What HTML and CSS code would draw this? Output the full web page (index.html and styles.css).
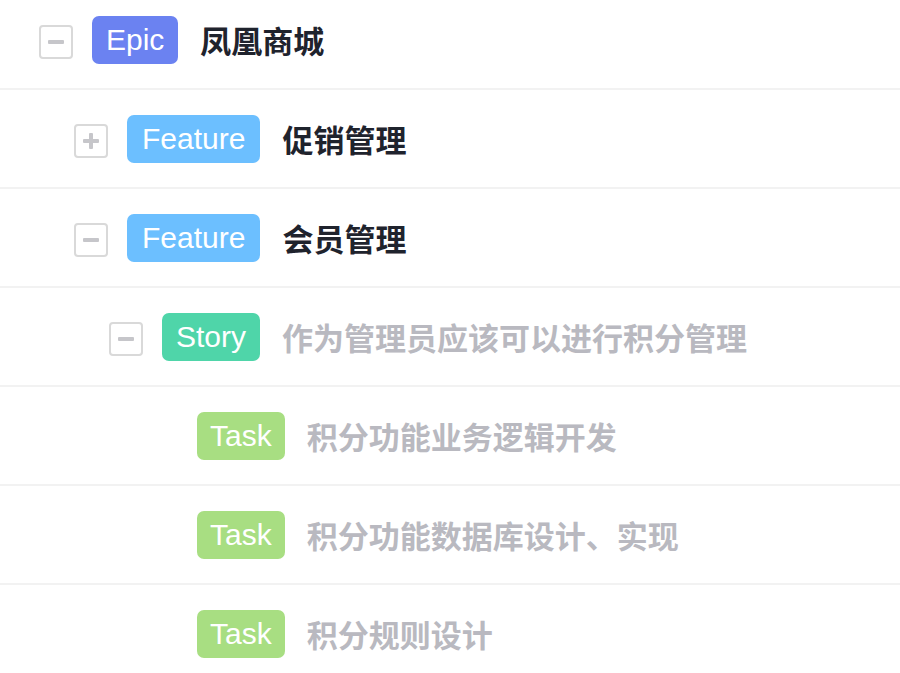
FILE: index.html
```html
<!DOCTYPE html>
<html lang="zh">
<head>
<meta charset="utf-8">
<link rel="stylesheet" href="styles.css">
</head>
<body>
<div class="tree">
  <div class="row lvl0">
    <span class="toggle minus"></span>
    <span class="badge epic">Epic</span>
    <span class="title">凤凰商城</span>
  </div>
  <div class="row lvl1">
    <span class="toggle plus"></span>
    <span class="badge feature">Feature</span>
    <span class="title">促销管理</span>
  </div>
  <div class="row lvl1">
    <span class="toggle minus"></span>
    <span class="badge feature">Feature</span>
    <span class="title">会员管理</span>
  </div>
  <div class="row lvl2">
    <span class="toggle minus"></span>
    <span class="badge story">Story</span>
    <span class="title muted">作为管理员应该可以进行积分管理</span>
  </div>
  <div class="row lvl3">
    <span class="toggle leaf"></span>
    <span class="badge task">Task</span>
    <span class="title muted">积分功能业务逻辑开发</span>
  </div>
  <div class="row lvl3">
    <span class="toggle leaf"></span>
    <span class="badge task">Task</span>
    <span class="title muted">积分功能数据库设计、实现</span>
  </div>
  <div class="row lvl3 last">
    <span class="toggle leaf"></span>
    <span class="badge task">Task</span>
    <span class="title muted">积分规则设计</span>
  </div>
</div>
</body>
</html>
```
FILE: styles.css
```css
html, body {
  margin: 0;
  padding: 0;
  background: #ffffff;
}
body {
  font-family: "Liberation Sans", "Noto Sans CJK SC", sans-serif;
  overflow: hidden;
}
.tree {
  margin-top: -9px;
}
.row {
  display: flex;
  align-items: center;
  height: 97px;
  border-bottom: 2px solid #f2f2f2;
  padding-left: 39px;
  box-sizing: content-box;
}
.row.last {
  border-bottom: none;
}
.lvl1 { padding-left: 74px; }
.lvl2 { padding-left: 109px; }
.lvl3 { padding-left: 144px; }

.toggle {
  position: relative;
  width: 30px;
  height: 30px;
  border: 2px solid #d9d9d9;
  border-radius: 4px;
  margin-right: 19px;
  margin-top: 5px;
  flex: none;
}
.toggle.leaf {
  visibility: hidden;
}
.toggle::before,
.toggle::after {
  content: "";
  position: absolute;
  background: #c6c6ca;
  border-radius: 1px;
}
.toggle.minus::before,
.toggle.plus::before {
  left: 7px;
  top: 13px;
  width: 16px;
  height: 4px;
}
.toggle.plus::after {
  left: 13px;
  top: 7px;
  width: 4px;
  height: 16px;
}
.toggle.minus::after,
.toggle.leaf::before,
.toggle.leaf::after {
  display: none;
}

.badge {
  display: inline-flex;
  align-items: center;
  height: 48px;
  padding: 0 14px;
  border-radius: 7px;
  color: #ffffff;
  font-family: "Liberation Sans", sans-serif;
  font-size: 30px;
  flex: none;
}
.epic { background: #6b82f1; }
.feature { background: #6cbfff; padding: 0 15px; }
.story { background: #4fd5a9; }
.task { background: #a8de82; padding: 0 13px; }

.title {
  margin-left: 22px;
  font-family: "Noto Sans CJK SC", sans-serif;
  font-weight: 700;
  font-size: 31px;
  color: #1f232d;
  white-space: nowrap;
}
.title.muted {
  color: #b9b9c0;
}
```
